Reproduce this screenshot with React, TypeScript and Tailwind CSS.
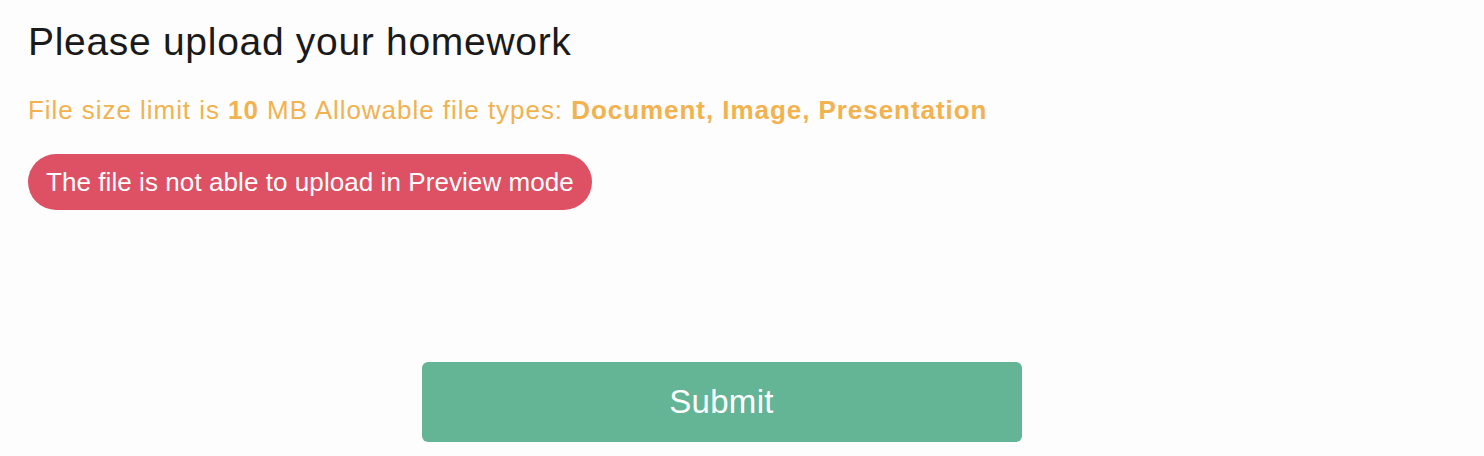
export default function App() {
  return (
    <div className="w-[1484px] h-[456px] bg-[#fdfdfd] font-['Liberation_Sans',Arial,sans-serif] overflow-hidden">
      <div className="w-[1443px] px-[28px] pt-[19px]">
        <h1 className="text-[39px] leading-[46px] tracking-[0.7px] text-[#1a1a1a]">Please upload your homework</h1>
        <p className="mt-[30px] text-[26px] leading-[30px] tracking-[0.95px] text-[#f1b24f]">
          File size limit is <span className="font-bold">10</span> MB Allowable file types:{" "}
          <span className="font-bold">Document, Image, Presentation</span>
        </p>
        <div className="mt-[29px] flex">
          <div className="rounded-full bg-[#de5063] h-[56px] px-[18px] flex items-center text-[26px] tracking-[0.07px] text-white">
            The file is not able to upload in Preview mode
          </div>
        </div>
        <div className="mt-[152px] flex justify-center">
          <button className="w-[600px] h-[80px] rounded-[6px] bg-[#63b596] text-white text-[33px] tracking-[0.3px]">
            Submit
          </button>
        </div>
      </div>
    </div>
  );
}
